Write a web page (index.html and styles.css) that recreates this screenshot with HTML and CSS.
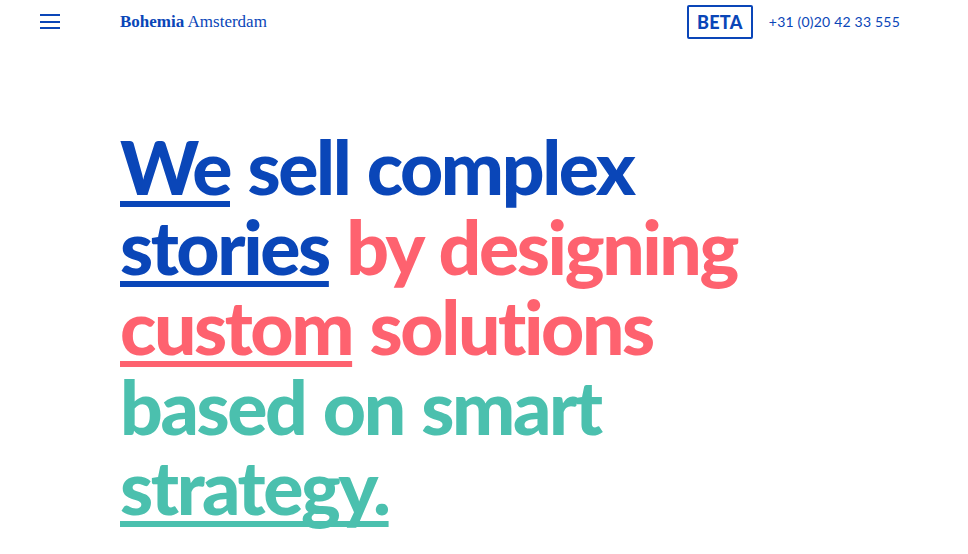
FILE: index.html
```html
<!DOCTYPE html>
<html lang="en">
<head>
<meta charset="utf-8">
<title>Bohemia Amsterdam</title>
<link rel="stylesheet" href="styles.css">
</head>
<body>
<header class="topbar">
  <button class="menu" aria-label="Menu">
    <span></span><span></span><span></span>
  </button>
  <div class="brand"><strong>Bohemia</strong> Amsterdam</div>
  <div class="right">
    <span class="beta">BETA</span>
    <span class="phone">+31 (0)20 42 33 555</span>
  </div>
</header>
<main class="hero">
  <h1 class="title">
    <span class="blue"><u>We</u> sell complex</span><br>
    <span class="blue"><u>stories</u></span> <span class="coral">by designing</span><br>
    <span class="coral"><u>custom</u> solutions</span><br>
    <span class="teal">based on smart</span><br>
    <span class="teal"><u>strategy.</u></span>
  </h1>
</main>
</body>
</html>
```

FILE: styles.css
```css
html, body {
  margin: 0;
  padding: 0;
  background: #ffffff;
}
body {
  width: 968px;
  height: 554px;
  overflow: hidden;
  font-family: "Lato", "Liberation Sans", sans-serif;
  color: #0a46b8;
}
.topbar {
  display: flex;
  align-items: center;
  height: 43px;
  padding: 0 68px 0 40px;
}
.menu {
  display: flex;
  flex-direction: column;
  gap: 4.6px;
  width: 20px;
  padding: 0;
  margin: 0;
  border: 0;
  background: none;
}
.menu span {
  display: block;
  height: 2px;
  background: #0a46b8;
}
.brand {
  margin-left: 60px;
  font-family: "Liberation Serif", "DejaVu Serif", serif;
  font-size: 17px;
  color: #0a46b8;
  padding-top: 1px;
}
.brand strong { font-weight: 700; }
.right {
  margin-left: auto;
  display: flex;
  align-items: center;
  gap: 16px;
}
.beta {
  display: inline-flex;
  align-items: center;
  justify-content: center;
  width: 62px;
  height: 30px;
  border: 2px solid #0a46b8;
  border-radius: 2px;
  font-weight: 900;
  font-size: 18px;
  letter-spacing: 0.3px;
  box-sizing: content-box;
}
.phone {
  font-size: 14px;
  letter-spacing: 0.2px;
}
.hero {
  padding: 83px 0 0 120px;
}
.title {
  margin: 0;
  font-size: 75px;
  line-height: 80px;
  font-weight: 900;
  letter-spacing: -2.4px;
  word-spacing: 2px;
  white-space: nowrap;
}
.title u {
  text-decoration: underline;
  text-decoration-thickness: 6px;
  text-underline-offset: 6px;
  text-decoration-skip-ink: none;
}
.blue { color: #0a46b8; }
.coral { color: #fe626f; }
.teal { color: #4bc0ae; }
```
